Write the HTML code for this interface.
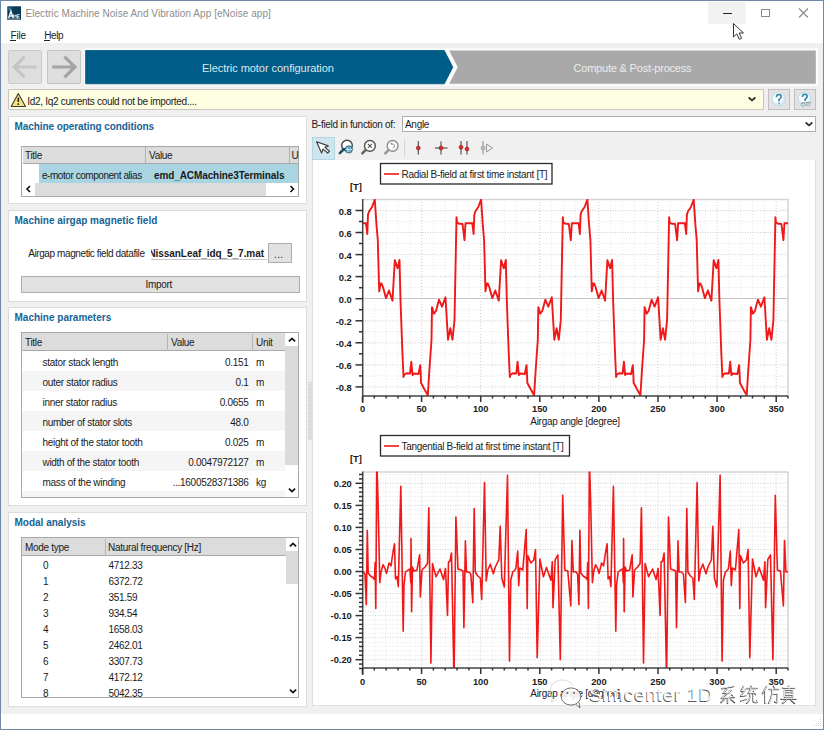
<!DOCTYPE html>
<html><head><meta charset="utf-8">
<style>
*{box-sizing:border-box}
html,body{margin:0;padding:0}
body{width:824px;height:730px;overflow:hidden;position:relative;background:#f0f0f0;font-family:"Liberation Sans",sans-serif;color:#1a1a1a}
.a{position:absolute}
.t{position:absolute;white-space:nowrap;font-size:10px;letter-spacing:-0.3px;line-height:12px}
.grp{position:absolute;background:#fff;border:1px solid #dcdcdc}
.gt{position:absolute;font-weight:bold;font-size:10px;color:#166394;white-space:nowrap;line-height:12px}
.btn{position:absolute;background:#e1e1e1;border:1px solid #adadad}
.hdr{position:absolute;background:#dcdcdc;border-bottom:1px solid #a9a9a9}
</style></head>
<body>
<!-- title + menu white area -->
<div class="a" style="left:0;top:0;width:824px;height:43px;background:#fff"></div>
<!-- status bar white -->
<div class="a" style="left:0;top:714px;width:824px;height:16px;background:#fff"></div>
<!-- window border -->
<div class="a" style="left:0;top:0;width:824px;height:730px;border:1px solid #6f8aa5"></div>

<!-- app icon -->
<svg class="a" style="left:7px;top:5.5px" width="15" height="15"><rect x="0.3" y="0.3" width="13.7" height="13.6" fill="#0b3a57"/><rect x="1.3" y="1.3" width="3.2" height="3.2" fill="#2b7aa0"/><path d="M1.6 12.3 L3.9 5.2 L6.2 12.3 M2.6 10 H5.2" fill="none" stroke="#fff" stroke-width="1.3"/><path d="M6.6 12.2 V8.6 L7.9 10.6 L9.2 8.6 V12.2 M10.5 8.6 V12.2 H12.8 M10.5 8.6 H12.8 M10.5 10.4 H12.4" fill="none" stroke="#dfe9ee" stroke-width="0.9"/><rect x="1" y="12.6" width="12" height="0.8" fill="#9fb8c6"/></svg>
<div class="t" style="left:25.5px;top:8.3px;font-size:10px;letter-spacing:0.05px;color:#8c8c8c">Electric Machine Noise And Vibration App [eNoise app]</div>

<!-- window controls -->
<div class="a" style="left:708px;top:2px;width:38px;height:22px;background:#f2f2f2"></div>
<div class="a" style="left:723px;top:13px;width:9px;height:1px;background:#222"></div>
<div class="a" style="left:761px;top:9px;width:9px;height:8px;border:1px solid #8a8a8a"></div>
<svg class="a" style="left:797px;top:7px" width="14" height="12"><path d="M2 1.5 L11 10.5 M11 1.5 L2 10.5" stroke="#8a8a8a" stroke-width="1.1"/></svg>
<!-- cursor -->
<svg class="a" style="left:730px;top:20px" width="20" height="22"><path d="M3.5 3.5 L3.5 17 L6.8 13.8 L9.3 19.3 L11.6 18.3 L9.2 13 L13.5 13 Z" fill="#fff" stroke="#333" stroke-width="1"/></svg>

<!-- menu -->
<div class="t" style="left:10.5px;top:29.7px;letter-spacing:-0.2px;color:#222">File</div>
<div class="a" style="left:10px;top:40px;width:6px;height:1px;background:#222"></div>
<div class="t" style="left:44.3px;top:29.7px;letter-spacing:-0.4px;color:#222">Help</div>
<div class="a" style="left:44px;top:40px;width:6px;height:1px;background:#222"></div>

<!-- nav buttons -->
<div class="a" style="left:8px;top:50px;width:34px;height:34px;background:#dedede;border:1px solid #cacaca;border-radius:1.5px"></div>
<svg class="a" style="left:8px;top:50px" width="34" height="34"><path d="M6 17 H28.5 M16.8 6.6 L6.2 17 L16.8 27.4" fill="none" stroke="#c6c6c6" stroke-width="3.2"/></svg>
<div class="a" style="left:47px;top:50px;width:34px;height:34px;background:#dedede;border:1px solid #c4c4c4;border-radius:1.5px"></div>
<svg class="a" style="left:47px;top:50px" width="34" height="34"><path d="M5.3 17 H28 M17.4 6.6 L28 17 L17.4 27.4" fill="none" stroke="#a4a4a4" stroke-width="3.2"/></svg>

<!-- stage arrows -->
<svg class="a" style="left:0;top:0" width="824" height="90">
<rect x="84" y="48.3" width="734" height="37.5" fill="#fbfbfb"/>
<polygon points="85.6,50.5 444.3,50.5 452.8,67.2 444.3,83.8 85.6,83.8" fill="#005c88" stroke="#00557f" stroke-width="0.8"/>
<polygon points="449.2,50.5 815.8,50.5 815.8,83.8 449.2,83.8 457.7,67.2" fill="#a9a9a9"/>
</svg>
<div class="t" style="left:202px;top:62px;font-size:11px;letter-spacing:-0.05px;color:#dde7ee">Electric motor configuration</div>
<div class="t" style="left:573.5px;top:62px;font-size:11px;letter-spacing:-0.2px;color:#ececec">Compute &amp; Post-process</div>

<!-- warning bar -->
<div class="a" style="left:8px;top:89px;width:755.5px;height:21px;background:#fefee2;border:1px solid #c6c6bc;border-radius:1px"></div>
<svg class="a" style="left:10px;top:92px" width="17" height="16"><path d="M8.3 1.5 L15.5 14.5 H1.2 Z" fill="#f7e47a" stroke="#3a3a3a" stroke-width="1.1" stroke-linejoin="round"/><path d="M8.3 5.5 V10" stroke="#222" stroke-width="1.6"/><rect x="7.5" y="11.3" width="1.6" height="1.6" fill="#222"/></svg>
<div class="t" style="left:27.3px;top:95.5px;color:#1a1a1a">Id2, Iq2 currents could not be imported....</div>
<svg class="a" style="left:747px;top:95px" width="10" height="8"><path d="M2 2 L5 4.6 L8 2 L8.3 3.4 L5 6.2 L1.7 3.4 Z" fill="#222" stroke="#222" stroke-width="0.6" stroke-linejoin="round"/></svg>
<div class="btn" style="left:768px;top:89px;width:22px;height:21px;background:#e3e3e3;border-color:#c0c0c0"></div>
<svg class="a" style="left:768px;top:89px" width="22" height="21"><defs><radialGradient id="hg" cx="0.45" cy="0.4" r="0.6"><stop offset="0.5" stop-color="#ffffff"/><stop offset="1" stop-color="#c4e0ec"/></radialGradient></defs><circle cx="10.6" cy="10.3" r="6.6" fill="url(#hg)" stroke="#bcd9e6" stroke-width="0.8"/><path d="M8.3 8.2 Q8.4 5.5 10.9 5.5 Q13.3 5.6 13.2 7.8 Q13.1 9.3 11.1 10.4 V12.6" fill="none" stroke="#3584aa" stroke-width="1.6"/><rect x="10.3" y="13.6" width="1.6" height="1.5" fill="#6aa6c4"/></svg>
<div class="btn" style="left:794px;top:89px;width:22px;height:21px;background:#e3e3e3;border-color:#c0c0c0"></div>
<svg class="a" style="left:794px;top:89px" width="22" height="21"><circle cx="10.6" cy="10.1" r="6.4" fill="url(#hg)" stroke="#bcd9e6" stroke-width="0.8"/><path d="M8.3 8 Q8.4 5.3 10.9 5.3 Q13.3 5.4 13.2 7.6 Q13.1 9.1 11.1 10.2 V12" fill="none" stroke="#3584aa" stroke-width="1.6"/><circle cx="9.2" cy="15.6" r="1.8" fill="#cfe6f0" stroke="#7a9aaa" stroke-width="0.7"/><circle cx="14.2" cy="15" r="1.8" fill="#cfe6f0" stroke="#7a9aaa" stroke-width="0.7"/><path d="M7 14.2 L12.5 13.3 L16.5 14" fill="none" stroke="#888" stroke-width="0.7"/></svg>

<!-- ============ LEFT PANEL ============ -->
<!-- group 1 -->
<div class="grp" style="left:8px;top:115.5px;width:299px;height:88.5px"></div>
<div class="gt" style="left:14.5px;top:121px;letter-spacing:-0.08px">Machine operating conditions</div>
<div class="a" style="left:21px;top:145.5px;width:278px;height:51px;border:1px solid #a8a8a8;background:#fff"></div>
<div class="hdr" style="left:22.5px;top:146.5px;width:275.5px;height:17px"></div>
<div class="a" style="left:145px;top:147px;width:1px;height:16px;background:#b4b4b4"></div>
<div class="a" style="left:289px;top:147px;width:1px;height:16px;background:#b4b4b4"></div>
<div class="t" style="left:25px;top:150px">Title</div>
<div class="t" style="left:149px;top:150px">Value</div>
<div class="t" style="left:291.5px;top:150px">U</div>
<div class="a" style="left:38.5px;top:164px;width:259.5px;height:19px;background:#a9d5e2"></div>
<div class="t" style="left:42px;top:170px;letter-spacing:-0.45px">e-motor component alias</div>
<div class="t" style="left:154px;top:170px;font-weight:bold;letter-spacing:-0.1px">emd_ACMachine3Terminals</div>
<div class="a" style="left:22.5px;top:183px;width:275.5px;height:12.5px;background:#dcdcdc"></div>
<div class="a" style="left:22.5px;top:183px;width:12.5px;height:12.5px;background:#fff"></div>
<div class="a" style="left:266px;top:183px;width:32px;height:12.5px;background:#fff"></div>
<svg class="a" style="left:24px;top:184px" width="10" height="10"><path d="M6 2 L3 5 L6 8" fill="none" stroke="#111" stroke-width="1.6"/></svg>
<svg class="a" style="left:287px;top:184px" width="10" height="10"><path d="M3.5 2 L6.5 5 L3.5 8" fill="none" stroke="#111" stroke-width="1.6"/></svg>

<!-- group 2 -->
<div class="grp" style="left:8px;top:210px;width:299px;height:91.5px"></div>
<div class="gt" style="left:14.5px;top:215px">Machine airgap magnetic field</div>
<div class="t" style="left:28.2px;top:248px;letter-spacing:-0.4px">Airgap magnetic field datafile</div>
<div class="a" style="left:150.5px;top:243px;width:116.5px;height:17px;background:#fff;border-bottom:1px solid #c8c8c8;overflow:hidden">
  <div class="t" style="right:3px;top:5px;font-weight:bold;letter-spacing:-0.05px">NissanLeaf_idq_5_7.mat</div>
</div>
<div class="btn" style="left:267.5px;top:243px;width:24px;height:19.5px"></div>
<div class="t" style="left:274px;top:249px;letter-spacing:0.4px">...</div>
<div class="btn" style="left:21px;top:275.5px;width:278.5px;height:17px"></div>
<div class="t" style="left:145.5px;top:279px">Import</div>

<!-- group 3 -->
<div class="grp" style="left:8px;top:306.5px;width:299px;height:199.5px"></div>
<div class="gt" style="left:14.5px;top:311.8px">Machine parameters</div>
<div class="a" style="left:21px;top:332px;width:278px;height:165.5px;border:1px solid #a8a8a8;background:#fff;overflow:hidden">
  <div class="hdr" style="left:0;top:0;width:263px;height:18px"></div>
  <div class="a" style="left:145px;top:1px;width:1px;height:17px;background:#b4b4b4"></div>
  <div class="a" style="left:230px;top:1px;width:1px;height:17px;background:#b4b4b4"></div>
  <div class="t" style="left:3px;top:4px">Title</div>
  <div class="t" style="left:149px;top:4px">Value</div>
  <div class="t" style="left:234px;top:4px">Unit</div>
  <div class="a" style="left:0;top:38px;width:263px;height:20px;background:#f5f5f5"></div>
  <div class="a" style="left:0;top:78px;width:263px;height:20px;background:#f5f5f5"></div>
  <div class="a" style="left:0;top:118px;width:263px;height:20px;background:#f5f5f5"></div>
  <div class="a" style="left:0;top:158px;width:263px;height:20px;background:#f5f5f5"></div>
  <div class="t" style="left:20.5px;top:24px">stator stack length</div>
  <div class="t" style="left:20.5px;top:44px">outer stator radius</div>
  <div class="t" style="left:20.5px;top:64px">inner stator radius</div>
  <div class="t" style="left:20.5px;top:84px">number of stator slots</div>
  <div class="t" style="left:20.5px;top:104px">height of the stator tooth</div>
  <div class="t" style="left:20.5px;top:124px">width of the stator tooth</div>
  <div class="t" style="left:20.5px;top:144px">mass of the winding</div>
  <div class="t" style="right:49.5px;top:24px">0.151</div>
  <div class="t" style="right:49.5px;top:44px">0.1</div>
  <div class="t" style="right:49.5px;top:64px">0.0655</div>
  <div class="t" style="right:49.5px;top:84px">48.0</div>
  <div class="t" style="right:49.5px;top:104px">0.025</div>
  <div class="t" style="right:49.5px;top:124px">0.0047972127</div>
  <div class="t" style="right:49.5px;top:144px">...1600528371386</div>
  <div class="t" style="left:234px;top:24px">m</div>
  <div class="t" style="left:234px;top:44px">m</div>
  <div class="t" style="left:234px;top:64px">m</div>
  <div class="t" style="left:234px;top:104px">m</div>
  <div class="t" style="left:234px;top:124px">m</div>
  <div class="t" style="left:234px;top:144px">kg</div>
  <!-- v scrollbar -->
  <div class="a" style="left:263px;top:0;width:13.5px;height:164px;background:#fff"></div>
  <div class="a" style="left:263px;top:13px;width:13.5px;height:119px;background:#dadada"></div>
  <svg class="a" style="left:264px;top:1px" width="12" height="12"><path d="M2.9 7.4 L6 4.5 L9.1 7.4" fill="none" stroke="#111" stroke-width="1.7"/></svg>
  <svg class="a" style="left:264px;top:151px" width="12" height="12"><path d="M2.9 4.6 L6 7.5 L9.1 4.6" fill="none" stroke="#111" stroke-width="1.7"/></svg>
</div>

<!-- group 4 -->
<div class="grp" style="left:8px;top:512px;width:299px;height:194.5px"></div>
<div class="gt" style="left:14.5px;top:517px">Modal analysis</div>
<div class="a" style="left:21px;top:537px;width:278px;height:160.5px;border:1px solid #a8a8a8;background:#fff;overflow:hidden">
  <div class="hdr" style="left:0;top:0;width:263.5px;height:18px"></div>
  <div class="a" style="left:83px;top:1px;width:1px;height:16px;background:#b4b4b4"></div>
  <div class="t" style="left:3px;top:4px">Mode type</div>
  <div class="t" style="left:86px;top:4px">Natural frequency [Hz]</div>
  <div class="t" style="left:21px;top:22px">0</div><div class="t" style="left:86.5px;top:22px">4712.33</div>
  <div class="t" style="left:21px;top:38px">1</div><div class="t" style="left:86.5px;top:38px">6372.72</div>
  <div class="t" style="left:21px;top:54px">2</div><div class="t" style="left:86.5px;top:54px">351.59</div>
  <div class="t" style="left:21px;top:70px">3</div><div class="t" style="left:86.5px;top:70px">934.54</div>
  <div class="t" style="left:21px;top:86px">4</div><div class="t" style="left:86.5px;top:86px">1658.03</div>
  <div class="t" style="left:21px;top:102px">5</div><div class="t" style="left:86.5px;top:102px">2462.01</div>
  <div class="t" style="left:21px;top:118px">6</div><div class="t" style="left:86.5px;top:118px">3307.73</div>
  <div class="t" style="left:21px;top:134px">7</div><div class="t" style="left:86.5px;top:134px">4172.12</div>
  <div class="t" style="left:21px;top:150px">8</div><div class="t" style="left:86.5px;top:150px">5042.35</div>
  <div class="a" style="left:263.5px;top:0;width:13.5px;height:160px;background:#fff"></div>
  <div class="a" style="left:263.5px;top:12.6px;width:13.5px;height:33.6px;background:#dadada"></div>
  <svg class="a" style="left:264.5px;top:1px" width="12" height="12"><path d="M2.9 7.4 L6 4.5 L9.1 7.4" fill="none" stroke="#111" stroke-width="1.7"/></svg>
  <svg class="a" style="left:264.5px;top:147px" width="12" height="12"><path d="M2.9 4.6 L6 7.5 L9.1 4.6" fill="none" stroke="#111" stroke-width="1.7"/></svg>
</div>

<!-- splitter -->
<div class="a" style="left:308px;top:382px;width:4px;height:58px;background:repeating-linear-gradient(to bottom,#d6d6d6 0,#d6d6d6 1px,#e4e4e4 1px,#e4e4e4 2px)"></div>

<!-- ============ RIGHT PANEL ============ -->
<div class="t" style="left:311.5px;top:119px">B-field in function of:</div>
<div class="a" style="left:401.5px;top:115.5px;width:414px;height:16px;background:#fff;border:1px solid #adadad"></div>
<div class="t" style="left:405px;top:119px">Angle</div>
<svg class="a" style="left:804px;top:120px" width="10" height="8"><path d="M2 2 L5 4.6 L8 2 L8.3 3.4 L5 6.2 L1.7 3.4 Z" fill="#222" stroke="#222" stroke-width="0.5" stroke-linejoin="round"/></svg>

<!-- toolbar -->
<div class="a" style="left:312px;top:137px;width:23px;height:22.5px;background:#cfe6ef;border:1px solid #b4d6e4"></div>
<svg class="a" style="left:312px;top:134px" width="190" height="26">
  <!-- pointer -->
  <path d="M0 0 L0 12.2 L3 9.3 L5.6 14.8 L7.9 13.8 L5.4 8.5 L9 8.5 Z" transform="translate(4.6 7.8) rotate(-24)" fill="#fff" stroke="#3a3a3a" stroke-width="1.15" stroke-linejoin="round"/>
  <!-- zoom 1 (globe) -->
  <circle cx="35" cy="11.6" r="5.3" fill="#fff" stroke="#444" stroke-width="1.4"/>
  <circle cx="36.8" cy="15.4" r="3.6" fill="#6fb0cf" stroke="#2e5d7a" stroke-width="0.9"/>
  <path d="M35 13.5 Q37 15.5 36 18.5 M33.5 15.5 H40" stroke="#d8eef6" stroke-width="0.7" fill="none"/>
  <path d="M32 15 L27.8 19.2" stroke="#1f4e63" stroke-width="2.5" stroke-linecap="round"/>
  <!-- zoom 2 (x) -->
  <circle cx="57.9" cy="11.9" r="5.4" fill="#fff" stroke="#555" stroke-width="1.5"/>
  <path d="M55.9 9.9 L59.9 13.9 M59.9 9.9 L55.9 13.9" stroke="#555" stroke-width="1.1"/>
  <path d="M53.6 16 L50.3 19.3" stroke="#666" stroke-width="2.5" stroke-linecap="round"/>
  <!-- zoom 3 (undo) -->
  <circle cx="80.6" cy="11.9" r="5.4" fill="#fff" stroke="#8c8c8c" stroke-width="1.4"/>
  <path d="M79.2 10.2 Q82 9.3 82.6 11.6 Q82.8 13.4 80.8 14.4" fill="none" stroke="#8c8c8c" stroke-width="1"/>
  <path d="M78.2 9.6 L80.2 8.3 L80.1 11 Z" fill="#8c8c8c"/>
  <path d="M76.6 16 L73.3 19.3" stroke="#999" stroke-width="2.5" stroke-linecap="round"/>
  <!-- separator -->
  <line x1="92.7" y1="5.5" x2="92.7" y2="22.5" stroke="#d0d0d0" stroke-width="1"/>
  <!-- markers -->
  <line x1="106.3" y1="7" x2="106.3" y2="20.5" stroke="#555" stroke-width="1.2"/>
  <circle cx="106.3" cy="14" r="2" fill="#e3262b" stroke="#7a1a1a" stroke-width="0.5"/>
  <line x1="129" y1="7.5" x2="129" y2="20.5" stroke="#555" stroke-width="1.2"/>
  <line x1="123" y1="14" x2="135.5" y2="14" stroke="#555" stroke-width="1.2"/>
  <circle cx="129" cy="14" r="2" fill="#e3262b" stroke="#7a1a1a" stroke-width="0.5"/>
  <line x1="149" y1="7" x2="149" y2="20.5" stroke="#555" stroke-width="1.2"/>
  <line x1="155" y1="7" x2="155" y2="20.5" stroke="#555" stroke-width="1.2"/>
  <circle cx="149" cy="13.2" r="2" fill="#e3262b" stroke="#7a1a1a" stroke-width="0.5"/>
  <circle cx="155" cy="15" r="2" fill="#e3262b" stroke="#7a1a1a" stroke-width="0.5"/>
  <line x1="171" y1="7" x2="171" y2="20.5" stroke="#999" stroke-width="1.2"/>
  <circle cx="171" cy="14" r="2" fill="#bbb" stroke="#888" stroke-width="0.5"/>
  <path d="M174.5 10 L180.5 14 L174.5 18 Z" fill="none" stroke="#999" stroke-width="1"/>
</svg>

<!-- chart area -->
<div class="a" style="left:312px;top:159.5px;width:503.5px;height:546.5px;background:#fff;border:1px solid #e0e0e0;border-top:none"></div>

<svg width="824" height="730" style="position:absolute;left:0;top:0">
<defs>
<clipPath id="cp1"><rect x="363" y="199" width="425" height="197"/></clipPath>
<clipPath id="cp2"><rect x="363" y="471.5" width="425" height="196.5"/></clipPath>
</defs>
<!-- chart 1 -->
<line x1="374.3" y1="199" x2="374.3" y2="396" stroke="#e6e6e6" stroke-width="1" stroke-dasharray="1 2"/>
<line x1="386.1" y1="199" x2="386.1" y2="396" stroke="#e6e6e6" stroke-width="1" stroke-dasharray="1 2"/>
<line x1="398" y1="199" x2="398" y2="396" stroke="#e6e6e6" stroke-width="1" stroke-dasharray="1 2"/>
<line x1="409.8" y1="199" x2="409.8" y2="396" stroke="#e6e6e6" stroke-width="1" stroke-dasharray="1 2"/>
<line x1="421.6" y1="199" x2="421.6" y2="396" stroke="#cdcdcd" stroke-width="1" stroke-dasharray="1 2"/>
<line x1="433.4" y1="199" x2="433.4" y2="396" stroke="#e6e6e6" stroke-width="1" stroke-dasharray="1 2"/>
<line x1="445.2" y1="199" x2="445.2" y2="396" stroke="#e6e6e6" stroke-width="1" stroke-dasharray="1 2"/>
<line x1="457.1" y1="199" x2="457.1" y2="396" stroke="#e6e6e6" stroke-width="1" stroke-dasharray="1 2"/>
<line x1="468.9" y1="199" x2="468.9" y2="396" stroke="#e6e6e6" stroke-width="1" stroke-dasharray="1 2"/>
<line x1="480.7" y1="199" x2="480.7" y2="396" stroke="#cdcdcd" stroke-width="1" stroke-dasharray="1 2"/>
<line x1="492.5" y1="199" x2="492.5" y2="396" stroke="#e6e6e6" stroke-width="1" stroke-dasharray="1 2"/>
<line x1="504.3" y1="199" x2="504.3" y2="396" stroke="#e6e6e6" stroke-width="1" stroke-dasharray="1 2"/>
<line x1="516.1" y1="199" x2="516.1" y2="396" stroke="#e6e6e6" stroke-width="1" stroke-dasharray="1 2"/>
<line x1="528" y1="199" x2="528" y2="396" stroke="#e6e6e6" stroke-width="1" stroke-dasharray="1 2"/>
<line x1="539.8" y1="199" x2="539.8" y2="396" stroke="#cdcdcd" stroke-width="1" stroke-dasharray="1 2"/>
<line x1="551.6" y1="199" x2="551.6" y2="396" stroke="#e6e6e6" stroke-width="1" stroke-dasharray="1 2"/>
<line x1="563.4" y1="199" x2="563.4" y2="396" stroke="#e6e6e6" stroke-width="1" stroke-dasharray="1 2"/>
<line x1="575.2" y1="199" x2="575.2" y2="396" stroke="#e6e6e6" stroke-width="1" stroke-dasharray="1 2"/>
<line x1="587.1" y1="199" x2="587.1" y2="396" stroke="#e6e6e6" stroke-width="1" stroke-dasharray="1 2"/>
<line x1="598.9" y1="199" x2="598.9" y2="396" stroke="#cdcdcd" stroke-width="1" stroke-dasharray="1 2"/>
<line x1="610.7" y1="199" x2="610.7" y2="396" stroke="#e6e6e6" stroke-width="1" stroke-dasharray="1 2"/>
<line x1="622.5" y1="199" x2="622.5" y2="396" stroke="#e6e6e6" stroke-width="1" stroke-dasharray="1 2"/>
<line x1="634.3" y1="199" x2="634.3" y2="396" stroke="#e6e6e6" stroke-width="1" stroke-dasharray="1 2"/>
<line x1="646.2" y1="199" x2="646.2" y2="396" stroke="#e6e6e6" stroke-width="1" stroke-dasharray="1 2"/>
<line x1="658" y1="199" x2="658" y2="396" stroke="#cdcdcd" stroke-width="1" stroke-dasharray="1 2"/>
<line x1="669.8" y1="199" x2="669.8" y2="396" stroke="#e6e6e6" stroke-width="1" stroke-dasharray="1 2"/>
<line x1="681.6" y1="199" x2="681.6" y2="396" stroke="#e6e6e6" stroke-width="1" stroke-dasharray="1 2"/>
<line x1="693.4" y1="199" x2="693.4" y2="396" stroke="#e6e6e6" stroke-width="1" stroke-dasharray="1 2"/>
<line x1="705.3" y1="199" x2="705.3" y2="396" stroke="#e6e6e6" stroke-width="1" stroke-dasharray="1 2"/>
<line x1="717.1" y1="199" x2="717.1" y2="396" stroke="#cdcdcd" stroke-width="1" stroke-dasharray="1 2"/>
<line x1="728.9" y1="199" x2="728.9" y2="396" stroke="#e6e6e6" stroke-width="1" stroke-dasharray="1 2"/>
<line x1="740.7" y1="199" x2="740.7" y2="396" stroke="#e6e6e6" stroke-width="1" stroke-dasharray="1 2"/>
<line x1="752.5" y1="199" x2="752.5" y2="396" stroke="#e6e6e6" stroke-width="1" stroke-dasharray="1 2"/>
<line x1="764.3" y1="199" x2="764.3" y2="396" stroke="#e6e6e6" stroke-width="1" stroke-dasharray="1 2"/>
<line x1="776.2" y1="199" x2="776.2" y2="396" stroke="#cdcdcd" stroke-width="1" stroke-dasharray="1 2"/>
<line x1="362.5" y1="386.9" x2="788" y2="386.9" stroke="#cdcdcd" stroke-width="1" stroke-dasharray="1 1.5"/>
<line x1="362.5" y1="375.9" x2="788" y2="375.9" stroke="#e6e6e6" stroke-width="1" stroke-dasharray="1 1.5"/>
<line x1="362.5" y1="364.9" x2="788" y2="364.9" stroke="#cdcdcd" stroke-width="1" stroke-dasharray="1 1.5"/>
<line x1="362.5" y1="353.8" x2="788" y2="353.8" stroke="#e6e6e6" stroke-width="1" stroke-dasharray="1 1.5"/>
<line x1="362.5" y1="342.8" x2="788" y2="342.8" stroke="#cdcdcd" stroke-width="1" stroke-dasharray="1 1.5"/>
<line x1="362.5" y1="331.8" x2="788" y2="331.8" stroke="#e6e6e6" stroke-width="1" stroke-dasharray="1 1.5"/>
<line x1="362.5" y1="320.8" x2="788" y2="320.8" stroke="#cdcdcd" stroke-width="1" stroke-dasharray="1 1.5"/>
<line x1="362.5" y1="309.7" x2="788" y2="309.7" stroke="#e6e6e6" stroke-width="1" stroke-dasharray="1 1.5"/>
<line x1="362.5" y1="287.7" x2="788" y2="287.7" stroke="#e6e6e6" stroke-width="1" stroke-dasharray="1 1.5"/>
<line x1="362.5" y1="276.6" x2="788" y2="276.6" stroke="#cdcdcd" stroke-width="1" stroke-dasharray="1 1.5"/>
<line x1="362.5" y1="265.6" x2="788" y2="265.6" stroke="#e6e6e6" stroke-width="1" stroke-dasharray="1 1.5"/>
<line x1="362.5" y1="254.6" x2="788" y2="254.6" stroke="#cdcdcd" stroke-width="1" stroke-dasharray="1 1.5"/>
<line x1="362.5" y1="243.5" x2="788" y2="243.5" stroke="#e6e6e6" stroke-width="1" stroke-dasharray="1 1.5"/>
<line x1="362.5" y1="232.5" x2="788" y2="232.5" stroke="#cdcdcd" stroke-width="1" stroke-dasharray="1 1.5"/>
<line x1="362.5" y1="221.5" x2="788" y2="221.5" stroke="#e6e6e6" stroke-width="1" stroke-dasharray="1 1.5"/>
<line x1="362.5" y1="210.5" x2="788" y2="210.5" stroke="#cdcdcd" stroke-width="1" stroke-dasharray="1 1.5"/>
<line x1="363" y1="298.5" x2="788" y2="298.5" stroke="#c4c4c4" stroke-width="1.2"/>
<path d="M363 199.5 H788 V396" fill="none" stroke="#d4d4d4" stroke-width="1.5"/>
<path d="M252.9 223.3 L259.7 223.3 L261 234 L261.7 214.7 L262.7 211.5 L265.7 207 L268.5 199.5 L270.2 225 L271.5 240 L272.7 284.4 L272.9 291.4 L274.2 283.5 L275.2 283.5 L276.7 287 L279.7 298.2 L282.7 290.5 L286.2 300.7 L288.5 260.1 L291.2 268.3 L293.2 260 L294.2 300 L296 350 L297.2 377 L298.2 374.5 L300.2 373.3 L303.7 373.5 L305 361.8 L306.2 375 L307.7 373.5 L312.2 374 L313.9 365.1 L314.5 375.5 L314.7 382.7 L317.7 388.5 L321.5 395.2 L323.2 368.3 L325.2 340 L325.7 307.1 L327.7 313.7 L329.7 311 L332.7 299.7 L335.7 306.7 L339.2 297.3 L341.7 339.7 L344 328.2 L346.2 339.7 L348.2 320 L350.2 217.2 L350.7 222.1 L352.2 223.5 L356.2 224 L358.2 240.2 L359.2 223.5 L359.2 223.3 L366 223.3 L367.3 234 L368 214.7 L369 211.5 L372 207 L374.8 199.5 L376.5 225 L377.8 240 L379 284.4 L379.2 291.4 L380.5 283.5 L381.5 283.5 L383 287 L386 298.2 L389 290.5 L392.5 300.7 L394.8 260.1 L397.5 268.3 L399.5 260 L400.5 300 L402.3 350 L403.5 377 L404.5 374.5 L406.5 373.3 L410 373.5 L411.3 361.8 L412.5 375 L414 373.5 L418.5 374 L420.2 365.1 L420.8 375.5 L421 382.7 L424 388.5 L427.8 395.2 L429.5 368.3 L431.5 340 L432 307.1 L434 313.7 L436 311 L439 299.7 L442 306.7 L445.5 297.3 L448 339.7 L450.3 328.2 L452.5 339.7 L454.5 320 L456.5 217.2 L457 222.1 L458.5 223.5 L462.5 224 L464.5 240.2 L465.5 223.5 L465.5 223.3 L472.3 223.3 L473.6 234 L474.3 214.7 L475.3 211.5 L478.3 207 L481.1 199.5 L482.8 225 L484.1 240 L485.3 284.4 L485.5 291.4 L486.8 283.5 L487.8 283.5 L489.3 287 L492.3 298.2 L495.3 290.5 L498.8 300.7 L501.1 260.1 L503.8 268.3 L505.8 260 L506.8 300 L508.6 350 L509.8 377 L510.8 374.5 L512.8 373.3 L516.3 373.5 L517.6 361.8 L518.8 375 L520.3 373.5 L524.8 374 L526.5 365.1 L527.1 375.5 L527.3 382.7 L530.3 388.5 L534.1 395.2 L535.8 368.3 L537.8 340 L538.3 307.1 L540.3 313.7 L542.3 311 L545.3 299.7 L548.3 306.7 L551.8 297.3 L554.3 339.7 L556.6 328.2 L558.8 339.7 L560.8 320 L562.8 217.2 L563.3 222.1 L564.8 223.5 L568.8 224 L570.8 240.2 L571.8 223.5 L571.8 223.3 L578.6 223.3 L579.9 234 L580.6 214.7 L581.6 211.5 L584.6 207 L587.4 199.5 L589.1 225 L590.4 240 L591.6 284.4 L591.8 291.4 L593.1 283.5 L594.1 283.5 L595.6 287 L598.6 298.2 L601.6 290.5 L605.1 300.7 L607.4 260.1 L610.1 268.3 L612.1 260 L613.1 300 L614.9 350 L616.1 377 L617.1 374.5 L619.1 373.3 L622.6 373.5 L623.9 361.8 L625.1 375 L626.6 373.5 L631.1 374 L632.8 365.1 L633.4 375.5 L633.6 382.7 L636.6 388.5 L640.4 395.2 L642.1 368.3 L644.1 340 L644.6 307.1 L646.6 313.7 L648.6 311 L651.6 299.7 L654.6 306.7 L658.1 297.3 L660.6 339.7 L662.9 328.2 L665.1 339.7 L667.1 320 L669.1 217.2 L669.6 222.1 L671.1 223.5 L675.1 224 L677.1 240.2 L678.1 223.5 L678.1 223.3 L684.9 223.3 L686.2 234 L686.9 214.7 L687.9 211.5 L690.9 207 L693.7 199.5 L695.4 225 L696.7 240 L697.9 284.4 L698.1 291.4 L699.4 283.5 L700.4 283.5 L701.9 287 L704.9 298.2 L707.9 290.5 L711.4 300.7 L713.7 260.1 L716.4 268.3 L718.4 260 L719.4 300 L721.2 350 L722.4 377 L723.4 374.5 L725.4 373.3 L728.9 373.5 L730.2 361.8 L731.4 375 L732.9 373.5 L737.4 374 L739.1 365.1 L739.7 375.5 L739.9 382.7 L742.9 388.5 L746.7 395.2 L748.4 368.3 L750.4 340 L750.9 307.1 L752.9 313.7 L754.9 311 L757.9 299.7 L760.9 306.7 L764.4 297.3 L766.9 339.7 L769.2 328.2 L771.4 339.7 L773.4 320 L775.4 217.2 L775.9 222.1 L777.4 223.5 L781.4 224 L783.4 240.2 L784.4 223.5 L784.4 223.3 L791.2 223.3 L792.5 234 L793.2 214.7 L794.2 211.5 L797.2 207 L800 199.5 L801.7 225 L803 240 L804.2 284.4 L804.4 291.4 L805.7 283.5 L806.7 283.5 L808.2 287 L811.2 298.2 L814.2 290.5 L817.7 300.7 L820 260.1 L822.7 268.3 L824.7 260 L825.7 300 L827.5 350 L828.7 377 L829.7 374.5 L831.7 373.3 L835.2 373.5 L836.5 361.8 L837.7 375 L839.2 373.5 L843.7 374 L845.4 365.1 L846 375.5 L846.2 382.7 L849.2 388.5 L853 395.2 L854.7 368.3 L856.7 340 L857.2 307.1 L859.2 313.7 L861.2 311 L864.2 299.7 L867.2 306.7 L870.7 297.3 L873.2 339.7 L875.5 328.2 L877.7 339.7 L879.7 320 L881.7 217.2 L882.2 222.1 L883.7 223.5 L887.7 224 L889.7 240.2 L890.7 223.5" fill="none" stroke="#f01818" stroke-width="1.9" stroke-linejoin="round" clip-path="url(#cp1)"/>
<path d="M362.7 199 V403 M362 396 H788" fill="none" stroke="#444" stroke-width="1.5"/>
<line x1="355.5" y1="386.9" x2="363" y2="386.9" stroke="#333" stroke-width="1.5"/>
<line x1="355.5" y1="364.9" x2="363" y2="364.9" stroke="#333" stroke-width="1.5"/>
<line x1="355.5" y1="342.8" x2="363" y2="342.8" stroke="#333" stroke-width="1.5"/>
<line x1="355.5" y1="320.8" x2="363" y2="320.8" stroke="#333" stroke-width="1.5"/>
<line x1="355.5" y1="298.7" x2="363" y2="298.7" stroke="#333" stroke-width="1.5"/>
<line x1="355.5" y1="276.6" x2="363" y2="276.6" stroke="#333" stroke-width="1.5"/>
<line x1="355.5" y1="254.6" x2="363" y2="254.6" stroke="#333" stroke-width="1.5"/>
<line x1="355.5" y1="232.5" x2="363" y2="232.5" stroke="#333" stroke-width="1.5"/>
<line x1="355.5" y1="210.5" x2="363" y2="210.5" stroke="#333" stroke-width="1.5"/>
<line x1="359" y1="375.9" x2="363" y2="375.9" stroke="#333" stroke-width="1.5"/>
<line x1="359" y1="353.8" x2="363" y2="353.8" stroke="#333" stroke-width="1.5"/>
<line x1="359" y1="331.8" x2="363" y2="331.8" stroke="#333" stroke-width="1.5"/>
<line x1="359" y1="309.7" x2="363" y2="309.7" stroke="#333" stroke-width="1.5"/>
<line x1="359" y1="287.7" x2="363" y2="287.7" stroke="#333" stroke-width="1.5"/>
<line x1="359" y1="265.6" x2="363" y2="265.6" stroke="#333" stroke-width="1.5"/>
<line x1="359" y1="243.5" x2="363" y2="243.5" stroke="#333" stroke-width="1.5"/>
<line x1="359" y1="221.5" x2="363" y2="221.5" stroke="#333" stroke-width="1.5"/>
<line x1="362.5" y1="396" x2="362.5" y2="402" stroke="#333" stroke-width="1.5"/>
<line x1="374.3" y1="396" x2="374.3" y2="398.5" stroke="#333" stroke-width="1.5"/>
<line x1="386.1" y1="396" x2="386.1" y2="398.5" stroke="#333" stroke-width="1.5"/>
<line x1="398" y1="396" x2="398" y2="398.5" stroke="#333" stroke-width="1.5"/>
<line x1="409.8" y1="396" x2="409.8" y2="398.5" stroke="#333" stroke-width="1.5"/>
<line x1="421.6" y1="396" x2="421.6" y2="402" stroke="#333" stroke-width="1.5"/>
<line x1="433.4" y1="396" x2="433.4" y2="398.5" stroke="#333" stroke-width="1.5"/>
<line x1="445.2" y1="396" x2="445.2" y2="398.5" stroke="#333" stroke-width="1.5"/>
<line x1="457.1" y1="396" x2="457.1" y2="398.5" stroke="#333" stroke-width="1.5"/>
<line x1="468.9" y1="396" x2="468.9" y2="398.5" stroke="#333" stroke-width="1.5"/>
<line x1="480.7" y1="396" x2="480.7" y2="402" stroke="#333" stroke-width="1.5"/>
<line x1="492.5" y1="396" x2="492.5" y2="398.5" stroke="#333" stroke-width="1.5"/>
<line x1="504.3" y1="396" x2="504.3" y2="398.5" stroke="#333" stroke-width="1.5"/>
<line x1="516.1" y1="396" x2="516.1" y2="398.5" stroke="#333" stroke-width="1.5"/>
<line x1="528" y1="396" x2="528" y2="398.5" stroke="#333" stroke-width="1.5"/>
<line x1="539.8" y1="396" x2="539.8" y2="402" stroke="#333" stroke-width="1.5"/>
<line x1="551.6" y1="396" x2="551.6" y2="398.5" stroke="#333" stroke-width="1.5"/>
<line x1="563.4" y1="396" x2="563.4" y2="398.5" stroke="#333" stroke-width="1.5"/>
<line x1="575.2" y1="396" x2="575.2" y2="398.5" stroke="#333" stroke-width="1.5"/>
<line x1="587.1" y1="396" x2="587.1" y2="398.5" stroke="#333" stroke-width="1.5"/>
<line x1="598.9" y1="396" x2="598.9" y2="402" stroke="#333" stroke-width="1.5"/>
<line x1="610.7" y1="396" x2="610.7" y2="398.5" stroke="#333" stroke-width="1.5"/>
<line x1="622.5" y1="396" x2="622.5" y2="398.5" stroke="#333" stroke-width="1.5"/>
<line x1="634.3" y1="396" x2="634.3" y2="398.5" stroke="#333" stroke-width="1.5"/>
<line x1="646.2" y1="396" x2="646.2" y2="398.5" stroke="#333" stroke-width="1.5"/>
<line x1="658" y1="396" x2="658" y2="402" stroke="#333" stroke-width="1.5"/>
<line x1="669.8" y1="396" x2="669.8" y2="398.5" stroke="#333" stroke-width="1.5"/>
<line x1="681.6" y1="396" x2="681.6" y2="398.5" stroke="#333" stroke-width="1.5"/>
<line x1="693.4" y1="396" x2="693.4" y2="398.5" stroke="#333" stroke-width="1.5"/>
<line x1="705.3" y1="396" x2="705.3" y2="398.5" stroke="#333" stroke-width="1.5"/>
<line x1="717.1" y1="396" x2="717.1" y2="402" stroke="#333" stroke-width="1.5"/>
<line x1="728.9" y1="396" x2="728.9" y2="398.5" stroke="#333" stroke-width="1.5"/>
<line x1="740.7" y1="396" x2="740.7" y2="398.5" stroke="#333" stroke-width="1.5"/>
<line x1="752.5" y1="396" x2="752.5" y2="398.5" stroke="#333" stroke-width="1.5"/>
<line x1="764.3" y1="396" x2="764.3" y2="398.5" stroke="#333" stroke-width="1.5"/>
<line x1="776.2" y1="396" x2="776.2" y2="402" stroke="#333" stroke-width="1.5"/>
<line x1="788" y1="396" x2="788" y2="398.5" stroke="#333" stroke-width="1.5"/>
<g font-family="Liberation Sans" font-weight="bold" font-size="9.3" fill="#1a1a1a">
<text x="351.8" y="391.1" text-anchor="end">-0.8</text>
<text x="351.8" y="369.1" text-anchor="end">-0.6</text>
<text x="351.8" y="347" text-anchor="end">-0.4</text>
<text x="351.8" y="325" text-anchor="end">-0.2</text>
<text x="351.8" y="302.9" text-anchor="end">0.0</text>
<text x="351.8" y="280.8" text-anchor="end">0.2</text>
<text x="351.8" y="258.8" text-anchor="end">0.4</text>
<text x="351.8" y="236.7" text-anchor="end">0.6</text>
<text x="351.8" y="214.7" text-anchor="end">0.8</text>
<text x="362.5" y="411.8" text-anchor="middle">0</text>
<text x="421.6" y="411.8" text-anchor="middle">50</text>
<text x="480.7" y="411.8" text-anchor="middle">100</text>
<text x="539.8" y="411.8" text-anchor="middle">150</text>
<text x="598.9" y="411.8" text-anchor="middle">200</text>
<text x="658" y="411.8" text-anchor="middle">250</text>
<text x="717.1" y="411.8" text-anchor="middle">300</text>
<text x="776.2" y="411.8" text-anchor="middle">350</text>
<text x="350" y="190" >[T]</text>
</g>
<text x="575" y="425" font-family="Liberation Sans" font-size="10" letter-spacing="-0.3" text-anchor="middle" fill="#222">Airgap angle [degree]</text>
<rect x="380.5" y="163.5" width="171.5" height="20.5" fill="#fff" stroke="#2a2a2a" stroke-width="1.3"/>
<line x1="384" y1="174" x2="399" y2="174" stroke="#f01818" stroke-width="1.6"/>
<text x="401.5" y="177.5" font-family="Liberation Sans" font-size="10" letter-spacing="-0.3" fill="#222">Radial B-field at first time instant [T]</text>

<!-- chart 2 -->
<line x1="374.3" y1="471.5" x2="374.3" y2="668" stroke="#e6e6e6" stroke-width="1" stroke-dasharray="1 2"/>
<line x1="386.1" y1="471.5" x2="386.1" y2="668" stroke="#e6e6e6" stroke-width="1" stroke-dasharray="1 2"/>
<line x1="398" y1="471.5" x2="398" y2="668" stroke="#e6e6e6" stroke-width="1" stroke-dasharray="1 2"/>
<line x1="409.8" y1="471.5" x2="409.8" y2="668" stroke="#e6e6e6" stroke-width="1" stroke-dasharray="1 2"/>
<line x1="421.6" y1="471.5" x2="421.6" y2="668" stroke="#cdcdcd" stroke-width="1" stroke-dasharray="1 2"/>
<line x1="433.4" y1="471.5" x2="433.4" y2="668" stroke="#e6e6e6" stroke-width="1" stroke-dasharray="1 2"/>
<line x1="445.2" y1="471.5" x2="445.2" y2="668" stroke="#e6e6e6" stroke-width="1" stroke-dasharray="1 2"/>
<line x1="457.1" y1="471.5" x2="457.1" y2="668" stroke="#e6e6e6" stroke-width="1" stroke-dasharray="1 2"/>
<line x1="468.9" y1="471.5" x2="468.9" y2="668" stroke="#e6e6e6" stroke-width="1" stroke-dasharray="1 2"/>
<line x1="480.7" y1="471.5" x2="480.7" y2="668" stroke="#cdcdcd" stroke-width="1" stroke-dasharray="1 2"/>
<line x1="492.5" y1="471.5" x2="492.5" y2="668" stroke="#e6e6e6" stroke-width="1" stroke-dasharray="1 2"/>
<line x1="504.3" y1="471.5" x2="504.3" y2="668" stroke="#e6e6e6" stroke-width="1" stroke-dasharray="1 2"/>
<line x1="516.1" y1="471.5" x2="516.1" y2="668" stroke="#e6e6e6" stroke-width="1" stroke-dasharray="1 2"/>
<line x1="528" y1="471.5" x2="528" y2="668" stroke="#e6e6e6" stroke-width="1" stroke-dasharray="1 2"/>
<line x1="539.8" y1="471.5" x2="539.8" y2="668" stroke="#cdcdcd" stroke-width="1" stroke-dasharray="1 2"/>
<line x1="551.6" y1="471.5" x2="551.6" y2="668" stroke="#e6e6e6" stroke-width="1" stroke-dasharray="1 2"/>
<line x1="563.4" y1="471.5" x2="563.4" y2="668" stroke="#e6e6e6" stroke-width="1" stroke-dasharray="1 2"/>
<line x1="575.2" y1="471.5" x2="575.2" y2="668" stroke="#e6e6e6" stroke-width="1" stroke-dasharray="1 2"/>
<line x1="587.1" y1="471.5" x2="587.1" y2="668" stroke="#e6e6e6" stroke-width="1" stroke-dasharray="1 2"/>
<line x1="598.9" y1="471.5" x2="598.9" y2="668" stroke="#cdcdcd" stroke-width="1" stroke-dasharray="1 2"/>
<line x1="610.7" y1="471.5" x2="610.7" y2="668" stroke="#e6e6e6" stroke-width="1" stroke-dasharray="1 2"/>
<line x1="622.5" y1="471.5" x2="622.5" y2="668" stroke="#e6e6e6" stroke-width="1" stroke-dasharray="1 2"/>
<line x1="634.3" y1="471.5" x2="634.3" y2="668" stroke="#e6e6e6" stroke-width="1" stroke-dasharray="1 2"/>
<line x1="646.2" y1="471.5" x2="646.2" y2="668" stroke="#e6e6e6" stroke-width="1" stroke-dasharray="1 2"/>
<line x1="658" y1="471.5" x2="658" y2="668" stroke="#cdcdcd" stroke-width="1" stroke-dasharray="1 2"/>
<line x1="669.8" y1="471.5" x2="669.8" y2="668" stroke="#e6e6e6" stroke-width="1" stroke-dasharray="1 2"/>
<line x1="681.6" y1="471.5" x2="681.6" y2="668" stroke="#e6e6e6" stroke-width="1" stroke-dasharray="1 2"/>
<line x1="693.4" y1="471.5" x2="693.4" y2="668" stroke="#e6e6e6" stroke-width="1" stroke-dasharray="1 2"/>
<line x1="705.3" y1="471.5" x2="705.3" y2="668" stroke="#e6e6e6" stroke-width="1" stroke-dasharray="1 2"/>
<line x1="717.1" y1="471.5" x2="717.1" y2="668" stroke="#cdcdcd" stroke-width="1" stroke-dasharray="1 2"/>
<line x1="728.9" y1="471.5" x2="728.9" y2="668" stroke="#e6e6e6" stroke-width="1" stroke-dasharray="1 2"/>
<line x1="740.7" y1="471.5" x2="740.7" y2="668" stroke="#e6e6e6" stroke-width="1" stroke-dasharray="1 2"/>
<line x1="752.5" y1="471.5" x2="752.5" y2="668" stroke="#e6e6e6" stroke-width="1" stroke-dasharray="1 2"/>
<line x1="764.3" y1="471.5" x2="764.3" y2="668" stroke="#e6e6e6" stroke-width="1" stroke-dasharray="1 2"/>
<line x1="776.2" y1="471.5" x2="776.2" y2="668" stroke="#cdcdcd" stroke-width="1" stroke-dasharray="1 2"/>
<line x1="362.5" y1="668.5" x2="788" y2="668.5" stroke="#e6e6e6" stroke-width="1" stroke-dasharray="1 1.5"/>
<line x1="362.5" y1="664.1" x2="788" y2="664.1" stroke="#e6e6e6" stroke-width="1" stroke-dasharray="1 1.5"/>
<line x1="362.5" y1="659.7" x2="788" y2="659.7" stroke="#cdcdcd" stroke-width="1" stroke-dasharray="1 1.5"/>
<line x1="362.5" y1="655.3" x2="788" y2="655.3" stroke="#e6e6e6" stroke-width="1" stroke-dasharray="1 1.5"/>
<line x1="362.5" y1="650.9" x2="788" y2="650.9" stroke="#e6e6e6" stroke-width="1" stroke-dasharray="1 1.5"/>
<line x1="362.5" y1="646.5" x2="788" y2="646.5" stroke="#e6e6e6" stroke-width="1" stroke-dasharray="1 1.5"/>
<line x1="362.5" y1="642.1" x2="788" y2="642.1" stroke="#e6e6e6" stroke-width="1" stroke-dasharray="1 1.5"/>
<line x1="362.5" y1="637.6" x2="788" y2="637.6" stroke="#cdcdcd" stroke-width="1" stroke-dasharray="1 1.5"/>
<line x1="362.5" y1="633.2" x2="788" y2="633.2" stroke="#e6e6e6" stroke-width="1" stroke-dasharray="1 1.5"/>
<line x1="362.5" y1="628.8" x2="788" y2="628.8" stroke="#e6e6e6" stroke-width="1" stroke-dasharray="1 1.5"/>
<line x1="362.5" y1="624.4" x2="788" y2="624.4" stroke="#e6e6e6" stroke-width="1" stroke-dasharray="1 1.5"/>
<line x1="362.5" y1="620" x2="788" y2="620" stroke="#e6e6e6" stroke-width="1" stroke-dasharray="1 1.5"/>
<line x1="362.5" y1="615.6" x2="788" y2="615.6" stroke="#cdcdcd" stroke-width="1" stroke-dasharray="1 1.5"/>
<line x1="362.5" y1="611.2" x2="788" y2="611.2" stroke="#e6e6e6" stroke-width="1" stroke-dasharray="1 1.5"/>
<line x1="362.5" y1="606.8" x2="788" y2="606.8" stroke="#e6e6e6" stroke-width="1" stroke-dasharray="1 1.5"/>
<line x1="362.5" y1="602.4" x2="788" y2="602.4" stroke="#e6e6e6" stroke-width="1" stroke-dasharray="1 1.5"/>
<line x1="362.5" y1="598" x2="788" y2="598" stroke="#e6e6e6" stroke-width="1" stroke-dasharray="1 1.5"/>
<line x1="362.5" y1="593.5" x2="788" y2="593.5" stroke="#cdcdcd" stroke-width="1" stroke-dasharray="1 1.5"/>
<line x1="362.5" y1="589.1" x2="788" y2="589.1" stroke="#e6e6e6" stroke-width="1" stroke-dasharray="1 1.5"/>
<line x1="362.5" y1="584.7" x2="788" y2="584.7" stroke="#e6e6e6" stroke-width="1" stroke-dasharray="1 1.5"/>
<line x1="362.5" y1="580.3" x2="788" y2="580.3" stroke="#e6e6e6" stroke-width="1" stroke-dasharray="1 1.5"/>
<line x1="362.5" y1="575.9" x2="788" y2="575.9" stroke="#e6e6e6" stroke-width="1" stroke-dasharray="1 1.5"/>
<line x1="362.5" y1="567.1" x2="788" y2="567.1" stroke="#e6e6e6" stroke-width="1" stroke-dasharray="1 1.5"/>
<line x1="362.5" y1="562.7" x2="788" y2="562.7" stroke="#e6e6e6" stroke-width="1" stroke-dasharray="1 1.5"/>
<line x1="362.5" y1="558.3" x2="788" y2="558.3" stroke="#e6e6e6" stroke-width="1" stroke-dasharray="1 1.5"/>
<line x1="362.5" y1="553.9" x2="788" y2="553.9" stroke="#e6e6e6" stroke-width="1" stroke-dasharray="1 1.5"/>
<line x1="362.5" y1="549.5" x2="788" y2="549.5" stroke="#cdcdcd" stroke-width="1" stroke-dasharray="1 1.5"/>
<line x1="362.5" y1="545" x2="788" y2="545" stroke="#e6e6e6" stroke-width="1" stroke-dasharray="1 1.5"/>
<line x1="362.5" y1="540.6" x2="788" y2="540.6" stroke="#e6e6e6" stroke-width="1" stroke-dasharray="1 1.5"/>
<line x1="362.5" y1="536.2" x2="788" y2="536.2" stroke="#e6e6e6" stroke-width="1" stroke-dasharray="1 1.5"/>
<line x1="362.5" y1="531.8" x2="788" y2="531.8" stroke="#e6e6e6" stroke-width="1" stroke-dasharray="1 1.5"/>
<line x1="362.5" y1="527.4" x2="788" y2="527.4" stroke="#cdcdcd" stroke-width="1" stroke-dasharray="1 1.5"/>
<line x1="362.5" y1="523" x2="788" y2="523" stroke="#e6e6e6" stroke-width="1" stroke-dasharray="1 1.5"/>
<line x1="362.5" y1="518.6" x2="788" y2="518.6" stroke="#e6e6e6" stroke-width="1" stroke-dasharray="1 1.5"/>
<line x1="362.5" y1="514.2" x2="788" y2="514.2" stroke="#e6e6e6" stroke-width="1" stroke-dasharray="1 1.5"/>
<line x1="362.5" y1="509.8" x2="788" y2="509.8" stroke="#e6e6e6" stroke-width="1" stroke-dasharray="1 1.5"/>
<line x1="362.5" y1="505.4" x2="788" y2="505.4" stroke="#cdcdcd" stroke-width="1" stroke-dasharray="1 1.5"/>
<line x1="362.5" y1="500.9" x2="788" y2="500.9" stroke="#e6e6e6" stroke-width="1" stroke-dasharray="1 1.5"/>
<line x1="362.5" y1="496.5" x2="788" y2="496.5" stroke="#e6e6e6" stroke-width="1" stroke-dasharray="1 1.5"/>
<line x1="362.5" y1="492.1" x2="788" y2="492.1" stroke="#e6e6e6" stroke-width="1" stroke-dasharray="1 1.5"/>
<line x1="362.5" y1="487.7" x2="788" y2="487.7" stroke="#e6e6e6" stroke-width="1" stroke-dasharray="1 1.5"/>
<line x1="362.5" y1="483.3" x2="788" y2="483.3" stroke="#cdcdcd" stroke-width="1" stroke-dasharray="1 1.5"/>
<line x1="362.5" y1="478.9" x2="788" y2="478.9" stroke="#e6e6e6" stroke-width="1" stroke-dasharray="1 1.5"/>
<line x1="362.5" y1="474.5" x2="788" y2="474.5" stroke="#e6e6e6" stroke-width="1" stroke-dasharray="1 1.5"/>
<line x1="363" y1="571.5" x2="788" y2="571.5" stroke="#c4c4c4" stroke-width="1.2"/>
<path d="M363 472 H788 V668" fill="none" stroke="#d4d4d4" stroke-width="1.5"/>
<path d="M256.2 572 L258.2 574 L260.2 602.6 L261.6 508.6 L262.7 572 L265.2 576 L267.7 578 L269.1 599.5 L271.9 482.6 L273.6 581 L275.2 570 L277.7 564.2 L279.2 569 L280.8 573.8 L282.7 567 L284.9 562.5 L286.2 560 L287.6 526.2 L289.2 578 L291.7 587.1 L294.9 475.2 L296.9 661.1 L298.2 580 L300.2 572 L303.2 569 L305.1 551.1 L306.1 585.8 L307.2 568 L310.2 570 L313.6 529.6 L314.6 608.6 L315.2 555.6 L318.2 563 L321.2 560 L322.9 549.5 L324.6 657.7 L327.3 559 L330.8 576.8 L333.9 567.5 L338.3 580.3 L339.7 561.8 L340.4 607.7 L342.6 559.7 L345.3 554.9 L347.4 646.7 L347.7 659.7 L350.1 495.3 L352.2 570 L355.2 571 L358.2 605.9 L359.3 540.5 L360.7 572 L363 571.5 L365 574 L366.3 604.7 L367.3 530.3 L368.2 573 L370.5 576 L373.5 578 L374.5 579.5 L375.1 562.5 L375.8 608.5 L376.8 460 L378 499.5 L379.8 582.7 L381 572 L383 564.7 L385 568.5 L386.5 573.4 L389 563 L391 565.8 L393 552 L394.5 543.8 L395.5 578.9 L397 576.7 L398.3 586.6 L400.8 486.4 L403.2 631.2 L404 585 L405.5 572 L408 570 L410 569 L410.8 582.6 L411 538.5 L411.6 611.8 L412.5 567 L414 571 L417 570 L419.6 554.8 L420.3 597 L422 570 L425 567 L427.5 563.5 L428.8 507.7 L430.7 645 L430.9 663.1 L432.5 563.6 L436 576.7 L440 569 L443.5 579.5 L445.5 568.5 L447.5 615.5 L448.5 562 L450 561 L451.5 553 L454 680 L455.9 517.1 L458 569 L461 570 L463 571 L463.9 627.7 L465.4 540.7 L466.5 572 L468.8 572 L470.8 574 L472.8 602.6 L474.2 508.6 L475.3 572 L477.8 576 L480.3 578 L481.7 599.5 L484.5 482.6 L486.2 581 L487.8 570 L490.3 564.2 L491.8 569 L493.4 573.8 L495.3 567 L497.5 562.5 L498.8 560 L500.2 526.2 L501.8 578 L504.3 587.1 L507.5 475.2 L509.5 661.1 L510.8 580 L512.8 572 L515.8 569 L517.7 551.1 L518.7 585.8 L519.8 568 L522.8 570 L526.2 529.6 L527.2 608.6 L527.8 555.6 L530.8 563 L533.8 560 L535.5 549.5 L537.2 657.7 L539.9 559 L543.4 576.8 L546.5 567.5 L550.9 580.3 L552.3 561.8 L553 607.7 L555.2 559.7 L557.9 554.9 L560 646.7 L560.3 659.7 L562.7 495.3 L564.8 570 L567.8 571 L570.8 605.9 L571.9 540.5 L573.3 572 L575.6 571.5 L577.6 574 L578.9 604.7 L579.9 530.3 L580.8 573 L583.1 576 L586.1 578 L587.1 579.5 L587.7 562.5 L588.4 608.5 L589.4 460 L590.6 499.5 L592.4 582.7 L593.6 572 L595.6 564.7 L597.6 568.5 L599.1 573.4 L601.6 563 L603.6 565.8 L605.6 552 L607.1 543.8 L608.1 578.9 L609.6 576.7 L610.9 586.6 L613.4 486.4 L615.8 631.2 L616.6 585 L618.1 572 L620.6 570 L622.6 569 L623.4 582.6 L623.6 538.5 L624.2 611.8 L625.1 567 L626.6 571 L629.6 570 L632.2 554.8 L632.9 597 L634.6 570 L637.6 567 L640.1 563.5 L641.4 507.7 L643.3 645 L643.5 663.1 L645.1 563.6 L648.6 576.7 L652.6 569 L656.1 579.5 L658.1 568.5 L660.1 615.5 L661.1 562 L662.6 561 L664.1 553 L666.6 680 L668.5 517.1 L670.6 569 L673.6 570 L675.6 571 L676.5 627.7 L678 540.7 L679.1 572 L681.4 572 L683.4 574 L685.4 602.6 L686.8 508.6 L687.9 572 L690.4 576 L692.9 578 L694.3 599.5 L697.1 482.6 L698.8 581 L700.4 570 L702.9 564.2 L704.4 569 L706 573.8 L707.9 567 L710.1 562.5 L711.4 560 L712.8 526.2 L714.4 578 L716.9 587.1 L720.1 475.2 L722.1 661.1 L723.4 580 L725.4 572 L728.4 569 L730.3 551.1 L731.3 585.8 L732.4 568 L735.4 570 L738.8 529.6 L739.8 608.6 L740.4 555.6 L743.4 563 L746.4 560 L748.1 549.5 L749.8 657.7 L752.5 559 L756 576.8 L759.1 567.5 L763.5 580.3 L764.9 561.8 L765.6 607.7 L767.8 559.7 L770.5 554.9 L772.6 646.7 L772.9 659.7 L775.3 495.3 L777.4 570 L780.4 571 L783.4 605.9 L784.5 540.5 L785.9 572 L788.2 571.5 L790.2 574 L791.5 604.7 L792.5 530.3 L793.4 573 L795.7 576 L798.7 578 L799.7 579.5 L800.3 562.5 L801 608.5 L802 460 L803.2 499.5 L805 582.7 L806.2 572 L808.2 564.7 L810.2 568.5 L811.7 573.4 L814.2 563 L816.2 565.8 L818.2 552 L819.7 543.8 L820.7 578.9 L822.2 576.7 L823.5 586.6 L826 486.4 L828.4 631.2 L829.2 585 L830.7 572 L833.2 570 L835.2 569 L836 582.6 L836.2 538.5 L836.8 611.8 L837.7 567 L839.2 571 L842.2 570 L844.8 554.8 L845.5 597 L847.2 570 L850.2 567 L852.7 563.5 L854 507.7 L855.9 645 L856.1 663.1 L857.7 563.6 L861.2 576.7 L865.2 569 L868.7 579.5 L870.7 568.5 L872.7 615.5 L873.7 562 L875.2 561 L876.7 553 L879.2 680 L881.1 517.1 L883.2 569 L886.2 570 L888.2 571 L889.1 627.7 L890.6 540.7 L891.7 572" fill="none" stroke="#f01818" stroke-width="1.6" stroke-linejoin="round" clip-path="url(#cp2)"/>
<path d="M362.7 471.5 V675 M362 668 H788" fill="none" stroke="#444" stroke-width="1.5"/>
<line x1="355.5" y1="659.7" x2="363" y2="659.7" stroke="#333" stroke-width="1.5"/>
<line x1="355.5" y1="637.6" x2="363" y2="637.6" stroke="#333" stroke-width="1.5"/>
<line x1="355.5" y1="615.6" x2="363" y2="615.6" stroke="#333" stroke-width="1.5"/>
<line x1="355.5" y1="593.5" x2="363" y2="593.5" stroke="#333" stroke-width="1.5"/>
<line x1="355.5" y1="571.5" x2="363" y2="571.5" stroke="#333" stroke-width="1.5"/>
<line x1="355.5" y1="549.5" x2="363" y2="549.5" stroke="#333" stroke-width="1.5"/>
<line x1="355.5" y1="527.4" x2="363" y2="527.4" stroke="#333" stroke-width="1.5"/>
<line x1="355.5" y1="505.4" x2="363" y2="505.4" stroke="#333" stroke-width="1.5"/>
<line x1="355.5" y1="483.3" x2="363" y2="483.3" stroke="#333" stroke-width="1.5"/>
<line x1="359" y1="668.5" x2="363" y2="668.5" stroke="#333" stroke-width="1.5"/>
<line x1="359" y1="664.1" x2="363" y2="664.1" stroke="#333" stroke-width="1.5"/>
<line x1="359" y1="655.3" x2="363" y2="655.3" stroke="#333" stroke-width="1.5"/>
<line x1="359" y1="650.9" x2="363" y2="650.9" stroke="#333" stroke-width="1.5"/>
<line x1="359" y1="646.5" x2="363" y2="646.5" stroke="#333" stroke-width="1.5"/>
<line x1="359" y1="642.1" x2="363" y2="642.1" stroke="#333" stroke-width="1.5"/>
<line x1="359" y1="633.2" x2="363" y2="633.2" stroke="#333" stroke-width="1.5"/>
<line x1="359" y1="628.8" x2="363" y2="628.8" stroke="#333" stroke-width="1.5"/>
<line x1="359" y1="624.4" x2="363" y2="624.4" stroke="#333" stroke-width="1.5"/>
<line x1="359" y1="620" x2="363" y2="620" stroke="#333" stroke-width="1.5"/>
<line x1="359" y1="611.2" x2="363" y2="611.2" stroke="#333" stroke-width="1.5"/>
<line x1="359" y1="606.8" x2="363" y2="606.8" stroke="#333" stroke-width="1.5"/>
<line x1="359" y1="602.4" x2="363" y2="602.4" stroke="#333" stroke-width="1.5"/>
<line x1="359" y1="598" x2="363" y2="598" stroke="#333" stroke-width="1.5"/>
<line x1="359" y1="589.1" x2="363" y2="589.1" stroke="#333" stroke-width="1.5"/>
<line x1="359" y1="584.7" x2="363" y2="584.7" stroke="#333" stroke-width="1.5"/>
<line x1="359" y1="580.3" x2="363" y2="580.3" stroke="#333" stroke-width="1.5"/>
<line x1="359" y1="575.9" x2="363" y2="575.9" stroke="#333" stroke-width="1.5"/>
<line x1="359" y1="567.1" x2="363" y2="567.1" stroke="#333" stroke-width="1.5"/>
<line x1="359" y1="562.7" x2="363" y2="562.7" stroke="#333" stroke-width="1.5"/>
<line x1="359" y1="558.3" x2="363" y2="558.3" stroke="#333" stroke-width="1.5"/>
<line x1="359" y1="553.9" x2="363" y2="553.9" stroke="#333" stroke-width="1.5"/>
<line x1="359" y1="545" x2="363" y2="545" stroke="#333" stroke-width="1.5"/>
<line x1="359" y1="540.6" x2="363" y2="540.6" stroke="#333" stroke-width="1.5"/>
<line x1="359" y1="536.2" x2="363" y2="536.2" stroke="#333" stroke-width="1.5"/>
<line x1="359" y1="531.8" x2="363" y2="531.8" stroke="#333" stroke-width="1.5"/>
<line x1="359" y1="523" x2="363" y2="523" stroke="#333" stroke-width="1.5"/>
<line x1="359" y1="518.6" x2="363" y2="518.6" stroke="#333" stroke-width="1.5"/>
<line x1="359" y1="514.2" x2="363" y2="514.2" stroke="#333" stroke-width="1.5"/>
<line x1="359" y1="509.8" x2="363" y2="509.8" stroke="#333" stroke-width="1.5"/>
<line x1="359" y1="500.9" x2="363" y2="500.9" stroke="#333" stroke-width="1.5"/>
<line x1="359" y1="496.5" x2="363" y2="496.5" stroke="#333" stroke-width="1.5"/>
<line x1="359" y1="492.1" x2="363" y2="492.1" stroke="#333" stroke-width="1.5"/>
<line x1="359" y1="487.7" x2="363" y2="487.7" stroke="#333" stroke-width="1.5"/>
<line x1="359" y1="478.9" x2="363" y2="478.9" stroke="#333" stroke-width="1.5"/>
<line x1="359" y1="474.5" x2="363" y2="474.5" stroke="#333" stroke-width="1.5"/>
<line x1="362.5" y1="668" x2="362.5" y2="674" stroke="#333" stroke-width="1.5"/>
<line x1="374.3" y1="668" x2="374.3" y2="670.5" stroke="#333" stroke-width="1.5"/>
<line x1="386.1" y1="668" x2="386.1" y2="670.5" stroke="#333" stroke-width="1.5"/>
<line x1="398" y1="668" x2="398" y2="670.5" stroke="#333" stroke-width="1.5"/>
<line x1="409.8" y1="668" x2="409.8" y2="670.5" stroke="#333" stroke-width="1.5"/>
<line x1="421.6" y1="668" x2="421.6" y2="674" stroke="#333" stroke-width="1.5"/>
<line x1="433.4" y1="668" x2="433.4" y2="670.5" stroke="#333" stroke-width="1.5"/>
<line x1="445.2" y1="668" x2="445.2" y2="670.5" stroke="#333" stroke-width="1.5"/>
<line x1="457.1" y1="668" x2="457.1" y2="670.5" stroke="#333" stroke-width="1.5"/>
<line x1="468.9" y1="668" x2="468.9" y2="670.5" stroke="#333" stroke-width="1.5"/>
<line x1="480.7" y1="668" x2="480.7" y2="674" stroke="#333" stroke-width="1.5"/>
<line x1="492.5" y1="668" x2="492.5" y2="670.5" stroke="#333" stroke-width="1.5"/>
<line x1="504.3" y1="668" x2="504.3" y2="670.5" stroke="#333" stroke-width="1.5"/>
<line x1="516.1" y1="668" x2="516.1" y2="670.5" stroke="#333" stroke-width="1.5"/>
<line x1="528" y1="668" x2="528" y2="670.5" stroke="#333" stroke-width="1.5"/>
<line x1="539.8" y1="668" x2="539.8" y2="674" stroke="#333" stroke-width="1.5"/>
<line x1="551.6" y1="668" x2="551.6" y2="670.5" stroke="#333" stroke-width="1.5"/>
<line x1="563.4" y1="668" x2="563.4" y2="670.5" stroke="#333" stroke-width="1.5"/>
<line x1="575.2" y1="668" x2="575.2" y2="670.5" stroke="#333" stroke-width="1.5"/>
<line x1="587.1" y1="668" x2="587.1" y2="670.5" stroke="#333" stroke-width="1.5"/>
<line x1="598.9" y1="668" x2="598.9" y2="674" stroke="#333" stroke-width="1.5"/>
<line x1="610.7" y1="668" x2="610.7" y2="670.5" stroke="#333" stroke-width="1.5"/>
<line x1="622.5" y1="668" x2="622.5" y2="670.5" stroke="#333" stroke-width="1.5"/>
<line x1="634.3" y1="668" x2="634.3" y2="670.5" stroke="#333" stroke-width="1.5"/>
<line x1="646.2" y1="668" x2="646.2" y2="670.5" stroke="#333" stroke-width="1.5"/>
<line x1="658" y1="668" x2="658" y2="674" stroke="#333" stroke-width="1.5"/>
<line x1="669.8" y1="668" x2="669.8" y2="670.5" stroke="#333" stroke-width="1.5"/>
<line x1="681.6" y1="668" x2="681.6" y2="670.5" stroke="#333" stroke-width="1.5"/>
<line x1="693.4" y1="668" x2="693.4" y2="670.5" stroke="#333" stroke-width="1.5"/>
<line x1="705.3" y1="668" x2="705.3" y2="670.5" stroke="#333" stroke-width="1.5"/>
<line x1="717.1" y1="668" x2="717.1" y2="674" stroke="#333" stroke-width="1.5"/>
<line x1="728.9" y1="668" x2="728.9" y2="670.5" stroke="#333" stroke-width="1.5"/>
<line x1="740.7" y1="668" x2="740.7" y2="670.5" stroke="#333" stroke-width="1.5"/>
<line x1="752.5" y1="668" x2="752.5" y2="670.5" stroke="#333" stroke-width="1.5"/>
<line x1="764.3" y1="668" x2="764.3" y2="670.5" stroke="#333" stroke-width="1.5"/>
<line x1="776.2" y1="668" x2="776.2" y2="674" stroke="#333" stroke-width="1.5"/>
<line x1="788" y1="668" x2="788" y2="670.5" stroke="#333" stroke-width="1.5"/>
<g font-family="Liberation Sans" font-weight="bold" font-size="9.3" fill="#1a1a1a">
<text x="351.8" y="663.4" text-anchor="end">-0.20</text>
<text x="351.8" y="641.4" text-anchor="end">-0.15</text>
<text x="351.8" y="619.3" text-anchor="end">-0.10</text>
<text x="351.8" y="597.2" text-anchor="end">-0.05</text>
<text x="351.8" y="575.2" text-anchor="end">0.00</text>
<text x="351.8" y="553.2" text-anchor="end">0.05</text>
<text x="351.8" y="531.1" text-anchor="end">0.10</text>
<text x="351.8" y="509.1" text-anchor="end">0.15</text>
<text x="351.8" y="487" text-anchor="end">0.20</text>
<text x="362.5" y="684.8" text-anchor="middle">0</text>
<text x="421.6" y="684.8" text-anchor="middle">50</text>
<text x="480.7" y="684.8" text-anchor="middle">100</text>
<text x="539.8" y="684.8" text-anchor="middle">150</text>
<text x="598.9" y="684.8" text-anchor="middle">200</text>
<text x="658" y="684.8" text-anchor="middle">250</text>
<text x="717.1" y="684.8" text-anchor="middle">300</text>
<text x="776.2" y="684.8" text-anchor="middle">350</text>
<text x="350" y="462">[T]</text>
</g>
<text x="575" y="697" font-family="Liberation Sans" font-size="10" letter-spacing="-0.3" text-anchor="middle" fill="#222">Airgap angle [degree]</text>
<rect x="380.5" y="435.5" width="189" height="20.5" fill="#fff" stroke="#2a2a2a" stroke-width="1.3"/>
<line x1="384" y1="446" x2="399" y2="446" stroke="#f01818" stroke-width="1.6"/>
<text x="401.5" y="449.5" font-family="Liberation Sans" font-size="10" letter-spacing="-0.3" fill="#222">Tangential B-field at first time instant [T]</text>
</svg>


<!-- watermark -->
<svg class="a" style="left:0;top:0" width="824" height="730">
  <g fill="none" stroke="#d0d0d0" stroke-width="0.8">
    <path d="M552 697 Q549 692 551 686 Q555 680 562 680 Q570 680 573 686"/>
    <path d="M553 697 L551 702 L557 699"/>
  </g>
  <ellipse cx="571" cy="696.5" rx="9.8" ry="8.6" fill="rgba(255,255,255,0.85)" stroke="#4a4a4a" stroke-width="0.8"/>
  <path d="M576 704.5 L580 708 L579 702.5" fill="#fff" stroke="#4a4a4a" stroke-width="0.8"/>
  <circle cx="567.5" cy="693" r="0.9" fill="#555"/><circle cx="574" cy="693" r="0.9" fill="#555"/>
  <text x="588.4" y="702" font-family="Liberation Sans" font-size="19" letter-spacing="0.75" fill="#5a5a5a">Simcenter 1D</text><text x="589.2" y="701.3" font-family="Liberation Sans" font-size="19" letter-spacing="0.75" fill="#fff">Simcenter 1D</text>
  <g fill="none" stroke="#4a4a4a" stroke-width="1.5" stroke-linecap="round" stroke-linejoin="round" transform="translate(-0.5 0.6)">
    <g transform="translate(719 685)">
      <path d="M15 0.8 L3.5 3.2 M8.5 3.2 L4.5 7.8 L11 7.2 M12.5 4.8 L2.8 13 L15 11.6 M13.2 9.4 L15.6 12 M9 12 V17.8 M5.6 14 L2.4 17 M12.4 14 L16 17"/>
    </g>
    <g transform="translate(740 685)">
      <path d="M4 0.8 L1.5 5.8 L5 5.6 M6.2 3.8 L1 10.8 L6.6 10 M1 15.5 L6.6 13.6 M11.5 0.5 L12.3 2.2 M7.5 3 H17.5 M11 3.6 L8.6 8 L15.6 7.6 M14 5.8 L16 9 M10.6 9 Q10.6 15 7 17.8 M13.6 9 V16 Q13.6 17 15 17 H17.5 V15"/>
    </g>
    <g transform="translate(762 685)">
      <path d="M5 0.8 L1 8 M3.5 5.5 V17.8 M12 0.5 L13 2.5 M7.5 4 H17 M10.5 4 Q10.5 13 7 17.8 M10.2 8.5 H15.8 Q15.8 16 15 17.2 L13 16.2"/>
    </g>
    <g transform="translate(780 685)">
      <path d="M9 0.5 V4.3 M3 2.5 H15 M5 4.5 H13 V12 H5 Z M5 7 H13 M5 9.5 H13 M1.5 13.6 H16.5 M6.5 14.8 L3 17.8 M11.5 14.8 L15 17.8"/>
    </g>
  </g>
<g fill="none" stroke="#fff" stroke-width="0.9" stroke-linecap="round" stroke-linejoin="round">
    <g transform="translate(719 685)">
      <path d="M15 0.8 L3.5 3.2 M8.5 3.2 L4.5 7.8 L11 7.2 M12.5 4.8 L2.8 13 L15 11.6 M13.2 9.4 L15.6 12 M9 12 V17.8 M5.6 14 L2.4 17 M12.4 14 L16 17"/>
    </g>
    <g transform="translate(740 685)">
      <path d="M4 0.8 L1.5 5.8 L5 5.6 M6.2 3.8 L1 10.8 L6.6 10 M1 15.5 L6.6 13.6 M11.5 0.5 L12.3 2.2 M7.5 3 H17.5 M11 3.6 L8.6 8 L15.6 7.6 M14 5.8 L16 9 M10.6 9 Q10.6 15 7 17.8 M13.6 9 V16 Q13.6 17 15 17 H17.5 V15"/>
    </g>
    <g transform="translate(762 685)">
      <path d="M5 0.8 L1 8 M3.5 5.5 V17.8 M12 0.5 L13 2.5 M7.5 4 H17 M10.5 4 Q10.5 13 7 17.8 M10.2 8.5 H15.8 Q15.8 16 15 17.2 L13 16.2"/>
    </g>
    <g transform="translate(780 685)">
      <path d="M9 0.5 V4.3 M3 2.5 H15 M5 4.5 H13 V12 H5 Z M5 7 H13 M5 9.5 H13 M1.5 13.6 H16.5 M6.5 14.8 L3 17.8 M11.5 14.8 L15 17.8"/>
    </g>
  </g>
</svg>
<!-- size grip -->
<svg class="a" style="left:812px;top:718px" width="11" height="11"><g fill="#d0d0d0"><rect x="8" y="1" width="1" height="1"/><rect x="6" y="3" width="1" height="1"/><rect x="8" y="3" width="1" height="1"/><rect x="4" y="5" width="1" height="1"/><rect x="6" y="5" width="1" height="1"/><rect x="8" y="5" width="1" height="1"/><rect x="2" y="7" width="1" height="1"/><rect x="4" y="7" width="1" height="1"/><rect x="6" y="7" width="1" height="1"/><rect x="8" y="7" width="1" height="1"/></g></svg>
</body></html>
